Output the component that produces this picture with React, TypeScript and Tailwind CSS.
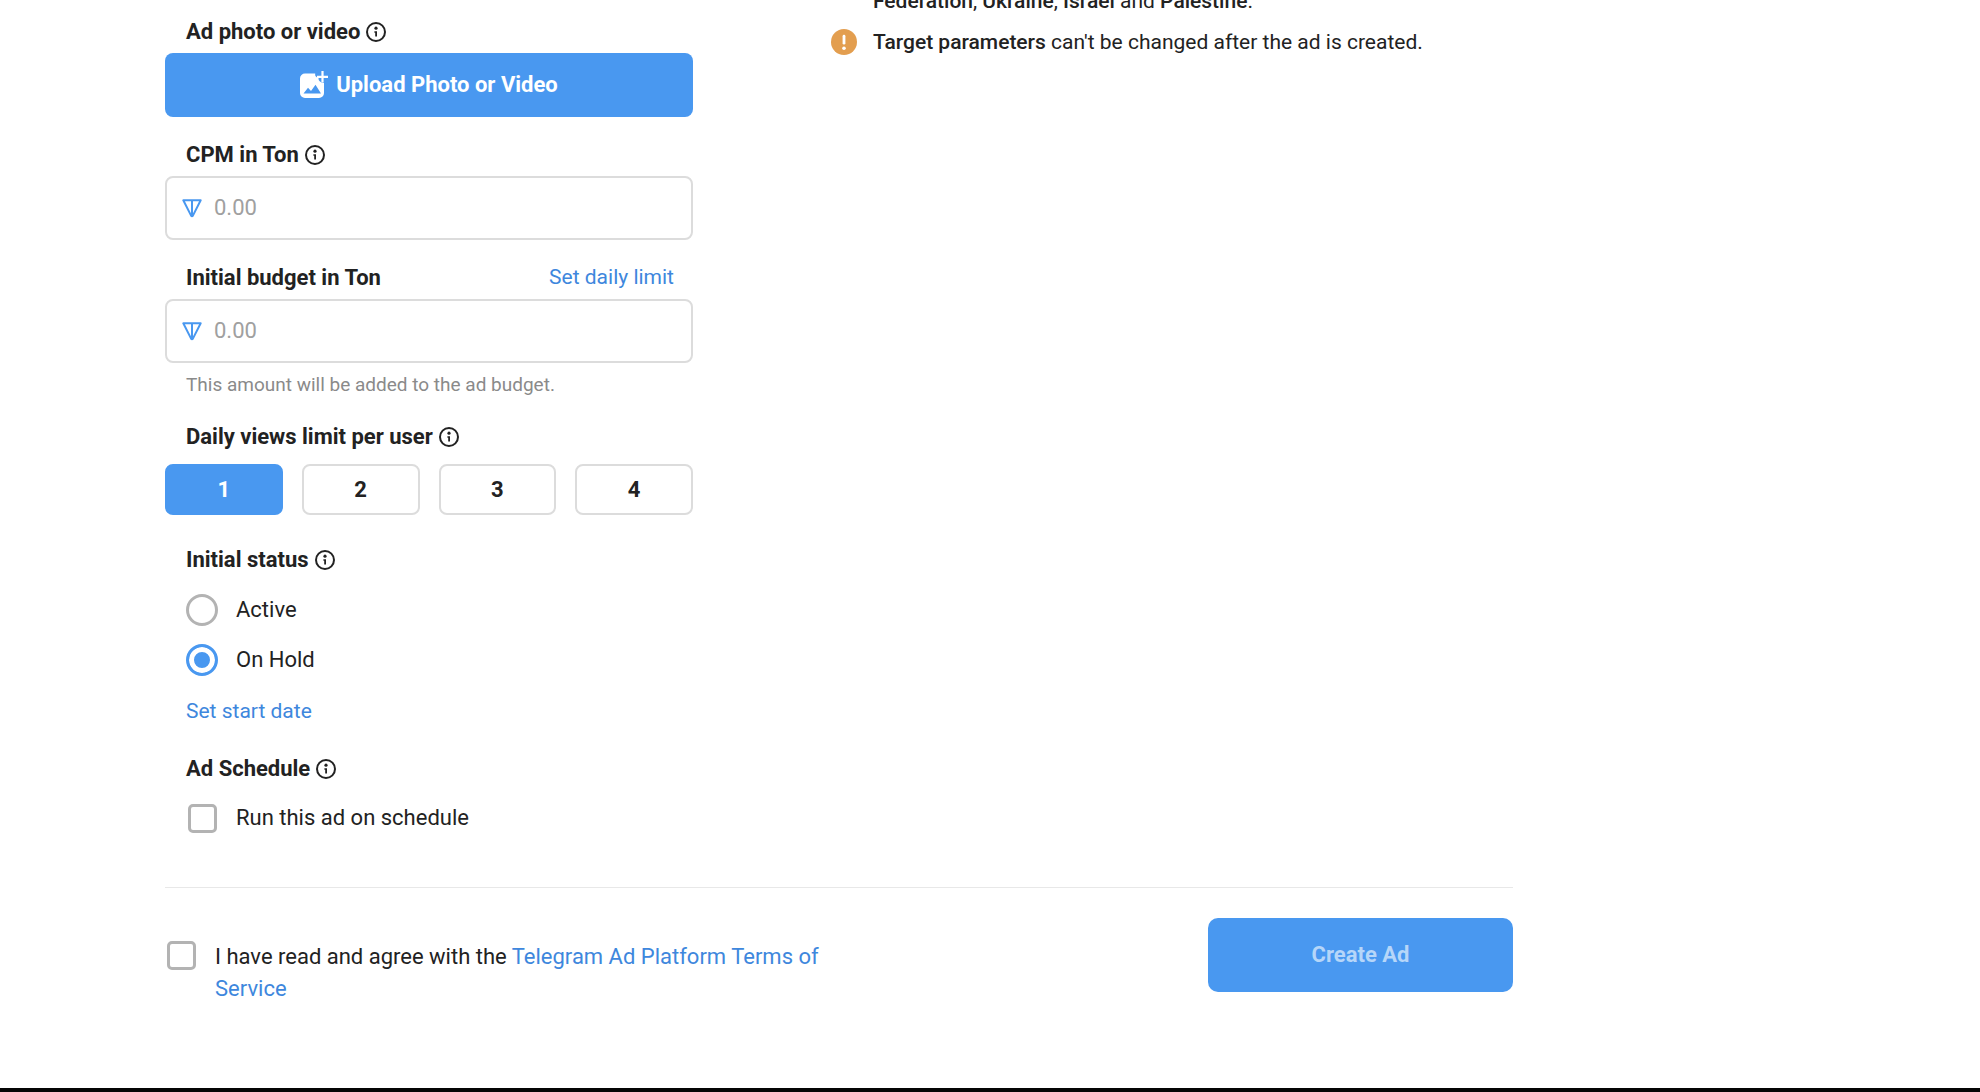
import React, { useState } from "react";

const VIEW_LIMITS = [1, 2, 3, 4];

export default function App() {
  const [views, setViews] = useState(1);
  const [status, setStatus] = useState("hold");

  return (
    <div className="flex flex-col min-h-screen overflow-hidden bg-white text-[#222222] font-['Roboto',sans-serif] text-[22px] leading-8">
      <main className="flex-1 w-full max-w-[1513px] pl-[165px]">
        <div className="flex gap-[138px]">
          {/* Form column */}
          <div className="w-[528px] shrink-0 pt-4">
            <section>
              <FieldLabel info>Ad photo or video</FieldLabel>
              <button
                type="button"
                className="mt-[5px] w-full h-16 flex items-center justify-center gap-2 rounded-lg bg-[#4998f0] text-white font-bold"
              >
                <PhotoAddIcon />
                Upload Photo or Video
              </button>
            </section>

            <section className="mt-[22px]">
              <FieldLabel htmlFor="cpm" info>
                CPM in Ton
              </FieldLabel>
              <TonInput id="cpm" />
            </section>

            <section className="mt-[22px]">
              <div className="flex items-center justify-between pr-[19px]">
                <FieldLabel htmlFor="budget">Initial budget in Ton</FieldLabel>
                <a href="#daily-limit" className="text-[21px] leading-7 pb-0.5 text-[#3e87dd]">
                  Set daily limit
                </a>
              </div>
              <TonInput id="budget" />
              <p className="mt-2 pl-[21px] text-[19px] leading-7 text-[#8a8a8a]">
                This amount will be added to the ad budget.
              </p>
            </section>

            <section className="mt-[22px]">
              <FieldLabel info>Daily views limit per user</FieldLabel>
              <div className="mt-[11px] grid grid-cols-4 gap-[19px]">
                {VIEW_LIMITS.map((n) => (
                  <button
                    key={n}
                    type="button"
                    aria-pressed={views === n}
                    onClick={() => setViews(n)}
                    className={`h-[51px] rounded-lg border-2 font-bold ${
                      views === n
                        ? "bg-[#4998f0] border-[#4998f0] text-white"
                        : "bg-white border-[#dcdcdc]"
                    }`}
                  >
                    {n}
                  </button>
                ))}
              </div>
            </section>

            <section className="mt-[29px]">
              <FieldLabel info>Initial status</FieldLabel>
              <div className="mt-[9px] pl-[21px]">
                <StatusOption
                  label="Active"
                  checked={status === "active"}
                  onChange={() => setStatus("active")}
                />
                <StatusOption
                  label="On Hold"
                  checked={status === "hold"}
                  onChange={() => setStatus("hold")}
                />
                <a href="#start-date" className="block mt-3 text-[21px] leading-7 text-[#3e87dd]">
                  Set start date
                </a>
              </div>
            </section>

            <section className="mt-7">
              <FieldLabel info>Ad Schedule</FieldLabel>
              <label className="mt-2 pl-[23px] h-[50px] flex items-center gap-[19px]">
                <Checkbox />
                Run this ad on schedule
              </label>
            </section>
          </div>

          {/* Notes column */}
          <ul className="flex-1 -mt-3.5 flex flex-col gap-[11px] text-[21px] leading-[30px]">
            <li className="pl-[42px]">
              <b className="font-medium">Federation</b>, <b className="font-medium">Ukraine</b>,{" "}
              <b className="font-medium">Israel</b> and <b className="font-medium">Palestine</b>.
            </li>
            <li className="flex items-center gap-4">
              <WarningIcon />
              <span>
                <b className="font-medium">Target parameters</b> can't be changed after the ad is
                created.
              </span>
            </li>
          </ul>
        </div>

        {/* Footer */}
        <div className="mt-11 pt-[30px] border-t border-[#e8e8e8] flex items-start justify-between">
          <div className="pt-[23px] pl-0.5 flex items-start gap-[19px]">
            <Checkbox id="terms" />
            <label htmlFor="terms" className="max-w-[640px]">
              I have read and agree with the{" "}
              <a href="#terms-of-service" className="text-[#3e87dd]">
                Telegram Ad Platform Terms of Service
              </a>
            </label>
          </div>
          <button
            type="button"
            className="w-[305px] h-[74px] rounded-[10px] bg-[#4998f0] text-[#b6d6f9] font-bold"
          >
            Create Ad
          </button>
        </div>
      </main>
      <div className="h-1 bg-[#050505]" />
    </div>
  );
}

interface FieldLabelProps {
  children: React.ReactNode;
  htmlFor?: string;
  info?: boolean;
}

function FieldLabel({ children, htmlFor, info }: FieldLabelProps) {
  return (
    <div className="flex items-center gap-1.5 pl-[21px] font-bold">
      {htmlFor ? <label htmlFor={htmlFor}>{children}</label> : <span>{children}</span>}
      {info && <InfoIcon />}
    </div>
  );
}

function TonInput({ id }: { id: string }) {
  return (
    <div className="mt-[5px] h-16 flex items-center gap-3 px-[15px] rounded-lg border-2 border-[#dcdcdc]">
      <TonIcon />
      <input
        id={id}
        type="text"
        placeholder="0.00"
        className="flex-1 min-w-0 outline-none placeholder:text-[#a0a0a0]"
      />
    </div>
  );
}

interface StatusOptionProps {
  label: string;
  checked: boolean;
  onChange: () => void;
}

function StatusOption({ label, checked, onChange }: StatusOptionProps) {
  return (
    <label className="h-[50px] flex items-center gap-[18px]">
      <input
        type="radio"
        name="status"
        checked={checked}
        onChange={onChange}
        className="appearance-none size-8 rounded-full border-3 border-[#b3b3b3] checked:border-[#4998f0] checked:bg-[#4998f0] checked:shadow-[inset_0_0_0_5px_white]"
      />
      {label}
    </label>
  );
}

function Checkbox({ id }: { id?: string }) {
  return (
    <input
      id={id}
      type="checkbox"
      className="appearance-none shrink-0 size-[29px] rounded-[5px] border-3 border-[#b3b3b3] checked:border-[#4998f0] checked:bg-[#4998f0]"
    />
  );
}

function InfoIcon() {
  return (
    <svg className="size-5 shrink-0" viewBox="0 0 20 20" fill="none">
      <circle cx="10" cy="10" r="9" stroke="#222222" strokeWidth="2" />
      <circle cx="10" cy="6.2" r="1.6" fill="#222222" />
      <path d="M8.4 9.2h2.6v5.4H9.2v-3.8h-.8z" fill="#222222" />
    </svg>
  );
}

function TonIcon() {
  return (
    <svg className="size-5 shrink-0" viewBox="0 0 20 20" fill="none">
      <path
        d="M1.3 2.3h17.4L10.9 17.6q-.9 1.4-1.8 0zM10 2.5v15"
        stroke="#4998f0"
        strokeWidth="2"
        strokeLinejoin="round"
      />
    </svg>
  );
}

function PhotoAddIcon() {
  return (
    <svg className="size-7 shrink-0" viewBox="0 0 28 28" fill="none">
      <path
        d="M5 2.5h10.2q-.6 3.7 3.2 4-.2 5 5.6 5.4V22a5 5 0 0 1-5 5H5a5 5 0 0 1-5-5V7.5a5 5 0 0 1 5-5z"
        fill="#fff"
      />
      <path d="M3.5 22.5 8 16.7l3 3.2 4.5-6.2 5.5 8.8z" fill="#4998f0" />
      <path d="M22.5 0v11.5M17 5.8h11" stroke="#fff" strokeWidth="2.2" />
    </svg>
  );
}

function WarningIcon() {
  return (
    <svg className="size-[26px] shrink-0" viewBox="0 0 26 26" fill="none">
      <circle cx="13" cy="13" r="13" fill="#e39e4f" />
      <path d="M13 7.2v7" stroke="#fff" strokeWidth="2.8" strokeLinecap="round" />
      <circle cx="13" cy="19.2" r="1.8" fill="#fff" />
    </svg>
  );
}
